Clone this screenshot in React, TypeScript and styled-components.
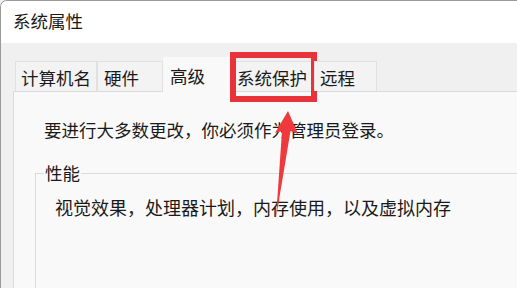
import React from "react";
import styled, { createGlobalStyle } from "styled-components";

const Global = createGlobalStyle`
  html, body { margin: 0; padding: 0; background: #f0f0f0; overflow: hidden; }
  body { font-family: "Noto Sans CJK SC", "Noto Sans", sans-serif; color: #1a1a1a; }
`;

const Window = styled.div`
  position: relative;
  width: 100vw;
  height: 100vh;
  box-sizing: border-box;
  display: flex;
  flex-direction: column;
  background: #f0f0f0;
  border-top: 1px solid #9a9a9a;
  border-left: 1px solid #9a9a9a;
  border-top-left-radius: 7px;
  overflow: hidden;
`;

const TitleBar = styled.div`
  flex: none;
  height: 42px;
  box-sizing: border-box;
  background: #ffffff;
  padding: 10px 0 0 12px;
  font-size: 17.5px;
  line-height: 20px;
  color: #1a1a1a;
`;

const Body = styled.div`
  flex: 1;
  min-height: 0;
  display: flex;
  flex-direction: column;
  padding: 14px 0 0 12px;
`;

const TabStrip = styled.div`
  flex: none;
  display: flex;
  align-items: flex-end;
  padding-left: 2px;
  position: relative;
  z-index: 1;
`;

const Tab = styled.div<{ $w: number; $active?: boolean; $pl: number }>`
  position: relative;
  box-sizing: border-box;
  width: ${(p) => p.$w}px;
  height: ${(p) => (p.$active ? 35 : 30)}px;
  margin-bottom: ${(p) => (p.$active ? -1 : 0)}px;
  padding: ${(p) => (p.$active ? 8 : 6)}px 0 0 ${(p) => p.$pl}px;
  background: ${(p) => (p.$active ? "#f9f9f9" : "#f3f3f3")};
  border: 1px solid ${(p) => (p.$active ? "transparent" : "#e1e1e1")};
  border-bottom: none;
  font-size: 17.5px;
  line-height: 20px;
  white-space: nowrap;
`;

const Highlight = styled.div`
  position: absolute;
  left: -1px;
  top: -10px;
  width: 87px;
  height: 50px;
  box-sizing: border-box;
  border: 6px solid #e8333a;
  pointer-events: none;
`;

const Panel = styled.div`
  flex: 1;
  min-height: 0;
  display: flex;
  flex-direction: column;
  background: #f9f9f9;
  border: 1px solid #dadada;
  border-right: none;
  border-bottom: none;
  padding: 28px 0 0 30px;
`;

const Notice = styled.div`
  font-size: 17.5px;
  line-height: 20px;
`;

const GroupBox = styled.fieldset`
  flex: 1;
  min-height: 0;
  margin: 23px 0 0 -9px;
  border: 1px solid #dcdcdc;
  border-right: none;
  border-bottom: none;
  padding: 0 0 0 19px;
`;

const GroupLegend = styled.legend`
  margin-left: -11px;
  padding: 0 1px;
  font-size: 17.5px;
  line-height: 20px;
`;

const GroupText = styled.div`
  margin-top: 14px;
  font-size: 18px;
  line-height: 20px;
  white-space: nowrap;
`;

const Arrow = styled.svg`
  position: absolute;
  left: 0;
  top: 0;
  pointer-events: none;
`;

const tabs = [
  { label: "计算机名", w: 82, pl: 5 },
  { label: "硬件", w: 66, pl: 6 },
  { label: "高级", w: 67, pl: 6, active: true },
  { label: "系统保护", w: 84, pl: 6, mark: true },
  { label: "远程", w: 63, pl: 5 },
];

export default function App() {
  return (
    <>
      <Global />
      <Window>
        <TitleBar>系统属性</TitleBar>
        <Body>
          <TabStrip>
            {tabs.map((t) => (
              <Tab key={t.label} $w={t.w} $pl={t.pl} $active={t.active}>
                {t.label}
                {t.mark && <Highlight />}
              </Tab>
            ))}
          </TabStrip>
          <Panel>
            <Notice>要进行大多数更改，你必须作为管理员登录。</Notice>
            <GroupBox>
              <GroupLegend>性能</GroupLegend>
              <GroupText>视觉效果，处理器计划，内存使用，以及虚拟内存</GroupText>
            </GroupBox>
          </Panel>
        </Body>
        <Arrow width="516" height="287" viewBox="1 1 516 287">
          <polygon
            points="288,111 298,134 290.5,131 276,218 282,131 275,133"
            fill="#ee3a3c"
          />
        </Arrow>
      </Window>
    </>
  );
}
